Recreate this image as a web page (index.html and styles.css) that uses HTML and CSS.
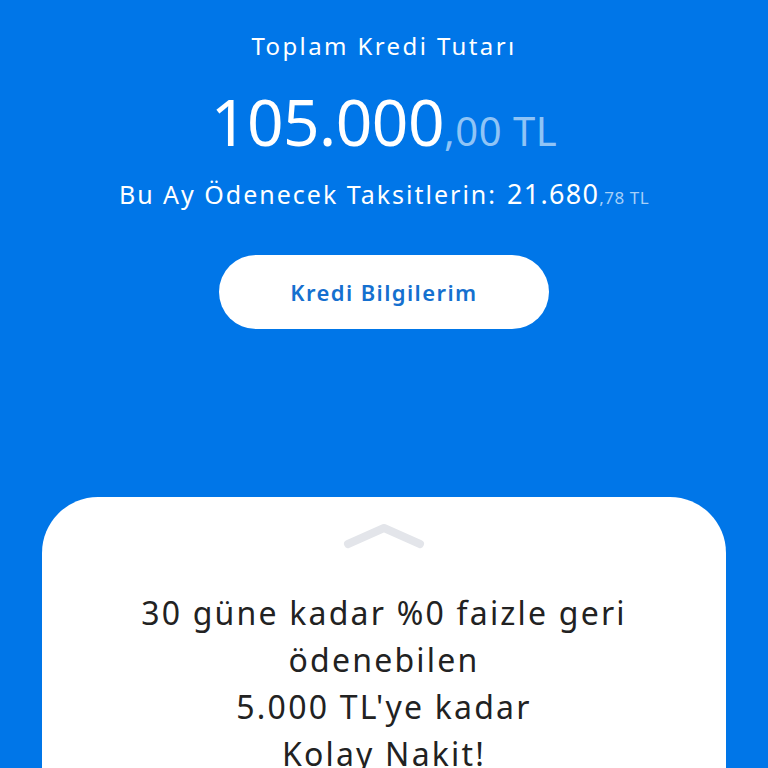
FILE: index.html
```html
<!DOCTYPE html>
<html lang="tr">
<head>
<meta charset="utf-8">
<link rel="stylesheet" href="styles.css">
</head>
<body>
<main class="screen">
  <section class="summary">
    <h1 class="title">Toplam Kredi Tutarı</h1>
    <div class="total"><span class="total-main">105.000</span><span class="total-dec">,00 TL</span></div>
    <div class="monthly"><span class="monthly-label">Bu Ay Ödenecek Taksitlerin:</span><span class="monthly-main">21.680</span><span class="monthly-dec">,78 TL</span></div>
    <button class="info-btn">Kredi Bilgilerim</button>
  </section>
  <section class="card">
    <svg class="chevron" width="84" height="30" viewBox="0 0 84 30"><path d="M6 22 L42 6 L78 22" fill="none" stroke="#e3e5ea" stroke-width="8" stroke-linecap="round" stroke-linejoin="round"/></svg>
    <p class="promo">30 güne kadar %0 faizle geri<br>ödenebilen<br>5.000 TL'ye kadar<br>Kolay Nakit!</p>
  </section>
</main>
</body>
</html>
```
FILE: styles.css
```css
* { box-sizing: border-box; }
html, body { margin: 0; padding: 0; }
body {
  background: #0076e8;
  font-family: "Noto Sans", "Open Sans", sans-serif;
  width: 768px;
  height: 768px;
  overflow: hidden;
}
.screen {
  display: flex;
  flex-direction: column;
  align-items: center;
}
.summary {
  display: flex;
  flex-direction: column;
  align-items: center;
  color: #fff;
}
.title {
  margin: 28px 0 0;
  font-size: 24px;
  font-weight: 400;
  line-height: 36px;
  letter-spacing: 2.4px;
}
.total {
  margin-top: 18px;
  line-height: 80px;
  white-space: nowrap;
}
.total-main { font-size: 64px; font-weight: 400; letter-spacing: -0.5px; }
.total-dec { font-size: 40px; color: #8fc4f6; letter-spacing: 0.5px; }
.monthly {
  margin-top: -3px;
  line-height: 34px;
  white-space: nowrap;
}
.monthly-label { font-size: 25px; margin-right: 10px; letter-spacing: 2px; }
.monthly-main { font-size: 27px; letter-spacing: 1.3px; }
.monthly-dec { font-size: 17px; color: #a6d0f8; letter-spacing: 0.5px; }
.info-btn {
  margin-top: 40px;
  width: 330px;
  height: 74px;
  border: none;
  border-radius: 37px;
  background: #fff;
  color: #1570cf;
  font-family: inherit;
  font-size: 22px;
  font-weight: 600;
  letter-spacing: 1.4px;
}
.card {
  margin-top: 168px;
  width: 684px;
  height: 400px;
  background: #fff;
  border-radius: 56px 56px 0 0;
  display: flex;
  flex-direction: column;
  align-items: center;
  padding-top: 25px;
}
.chevron { display: block; }
.promo {
  margin: 37px 0 0;
  text-align: center;
  font-size: 32px;
  line-height: 47px;
  color: #222;
  letter-spacing: 2.2px;
}
```
